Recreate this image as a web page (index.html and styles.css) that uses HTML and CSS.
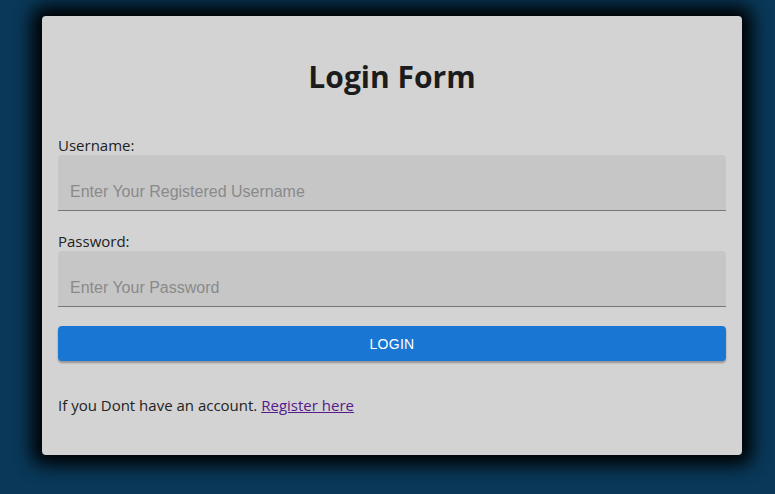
FILE: index.html
```html
<!DOCTYPE html>
<html>
<head>
<meta charset="utf-8">
<link rel="stylesheet" href="styles.css">
</head>
<body>
<div class="page">
  <form class="card">
    <h1 class="title">Login Form</h1>
    <label class="label" for="u">Username:</label>
    <input class="field" id="u" type="text" placeholder="Enter Your Registered Username">
    <label class="label" for="p">Password:</label>
    <input class="field" id="p" type="password" placeholder="Enter Your Password">
    <button class="btn" type="button">LOGIN</button>
    <p class="note">If you Dont have an account. <a href="#" class="link">Register here</a></p>
  </form>
</div>
</body>
</html>
```
FILE: styles.css
```css
html, body {
  margin: 0;
  height: 100%;
  background: #093858;
}
.page {
  padding: 16px 0 0 42px;
}
.card {
  width: 700px;
  height: 439px;
  box-sizing: border-box;
  background: #d3d3d3;
  border-radius: 4px;
  box-shadow: 0 0 18px 10px #000;
  padding: 41px 16px 0 16px;
  display: flex;
  flex-direction: column;
  font-family: "Open Sans", "Noto Sans", sans-serif;
  color: #222;
}
.title {
  margin: 0 0 38px 0;
  text-align: center;
  font-size: 30px;
  line-height: 40px;
  font-weight: 700;
  color: #1c1c1c;
}
.label {
  font-size: 15px;
  line-height: 20px;
  height: 20px;
}
.field {
  height: 56px;
  box-sizing: border-box;
  border: none;
  border-bottom: 1px solid #777;
  background: #c6c6c6;
  border-radius: 4px 4px 0 0;
  padding: 18px 12px 0 12px;
  font-family: "Liberation Sans", Arial, sans-serif;
  font-size: 16px;
  color: #333;
  margin: 0 0 20px 0;
  outline: none;
}
.field::placeholder {
  color: #8a8a8a;
}
.btn {
  height: 35px;
  margin-top: -1px;
  border: none;
  border-radius: 4px;
  background: #1976d2;
  color: #fff;
  font-family: "Liberation Sans", Arial, sans-serif;
  font-size: 14px;
  letter-spacing: 0.3px;
  box-shadow: 0 2px 2px rgba(0,0,0,0.3);
}
.note {
  margin: 34px 0 0 0;
  font-size: 15px;
  line-height: 20px;
}
.link {
  color: #551a8b;
}
```
